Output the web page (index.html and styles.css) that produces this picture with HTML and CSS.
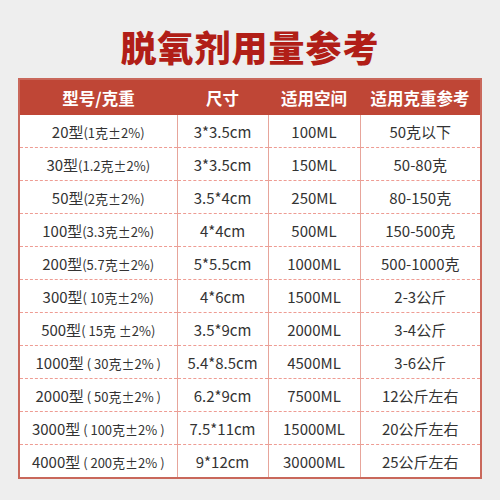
FILE: index.html
```html
<!DOCTYPE html>
<html lang="zh">
<head>
<meta charset="utf-8">
<link rel="stylesheet" href="styles.css">
</head>
<body>
<div class="page">
  <h1 class="title">脱氧剂用量参考</h1>
  <table class="ref">
    <thead>
      <tr><th class="c1">型号/克重</th><th class="c2">尺寸</th><th class="c3">适用空间</th><th class="c4">适用克重参考</th></tr>
    </thead>
    <tbody>
      <tr><td>20型<span class="sm">(1克±2%)</span></td><td>3*3.5cm</td><td>100ML</td><td>50克以下</td></tr>
      <tr><td>30型<span class="sm">(1.2克±2%)</span></td><td>3*3.5cm</td><td>150ML</td><td>50-80克</td></tr>
      <tr><td>50型<span class="sm">(2克±2%)</span></td><td>3.5*4cm</td><td>250ML</td><td>80-150克</td></tr>
      <tr><td>100型<span class="sm">(3.3克±2%)</span></td><td>4*4cm</td><td>500ML</td><td>150-500克</td></tr>
      <tr><td>200型<span class="sm">(5.7克±2%)</span></td><td>5*5.5cm</td><td>1000ML</td><td>500-1000克</td></tr>
      <tr><td>300型<span class="sm">( 10克±2%)</span></td><td>4*6cm</td><td>1500ML</td><td>2-3公斤</td></tr>
      <tr><td>500型<span class="sm">( 15克 ±2%)</span></td><td>3.5*9cm</td><td>2000ML</td><td>3-4公斤</td></tr>
      <tr><td>1000型<span class="sm"> ( 30克±2% )</span></td><td>5.4*8.5cm</td><td>4500ML</td><td>3-6公斤</td></tr>
      <tr><td>2000型<span class="sm"> ( 50克±2% )</span></td><td>6.2*9cm</td><td>7500ML</td><td>12公斤左右</td></tr>
      <tr><td>3000型<span class="sm"> ( 100克±2% )</span></td><td>7.5*11cm</td><td>15000ML</td><td>20公斤左右</td></tr>
      <tr><td>4000型<span class="sm"> ( 200克±2% )</span></td><td>9*12cm</td><td>30000ML</td><td>25公斤左右</td></tr>
    </tbody>
  </table>
</div>
</body>
</html>
```
FILE: styles.css
```css
html, body {
  margin: 0;
  padding: 0;
  background: #eeeeee;
}
.page {
  width: 500px;
  height: 500px;
  padding-top: 27px;
  box-sizing: border-box;
  font-family: "Noto Sans CJK SC", "Noto Sans", sans-serif;
}
.title {
  margin: 0 0 13px 0;
  height: 38px;
  line-height: 38px;
  text-align: center;
  font-size: 36px;
  font-weight: 900;
  color: #b11e17;
  letter-spacing: 1px;
}
.ref {
  margin-left: 18px;
  width: 464px;
  border-collapse: collapse;
  table-layout: fixed;
  border: 2px solid #c9685b;
  background: #ffffff;
}
.c1 { width: 157px; }
.c2 { width: 91px; }
.c3 { width: 92px; }
.c4 { width: auto; }
.ref th {
  background: #bf4636;
  color: #ffffff;
  font-weight: 700;
  font-size: 16.5px;
  height: 35px;
  padding: 0;
  text-align: center;
  border: none;
}
.ref td {
  height: 32px;
  padding: 0;
  text-align: center;
  font-size: 15px;
  color: #333333;
  border-left: 1px solid #e7a59b;
  border-right: 1px solid #e7a59b;
  border-top: 1px dashed #ee9c93;
  white-space: nowrap;
}
.ref tbody tr:first-child td {
  border-top: none;
}
.sm {
  font-size: 13px;
}
```
